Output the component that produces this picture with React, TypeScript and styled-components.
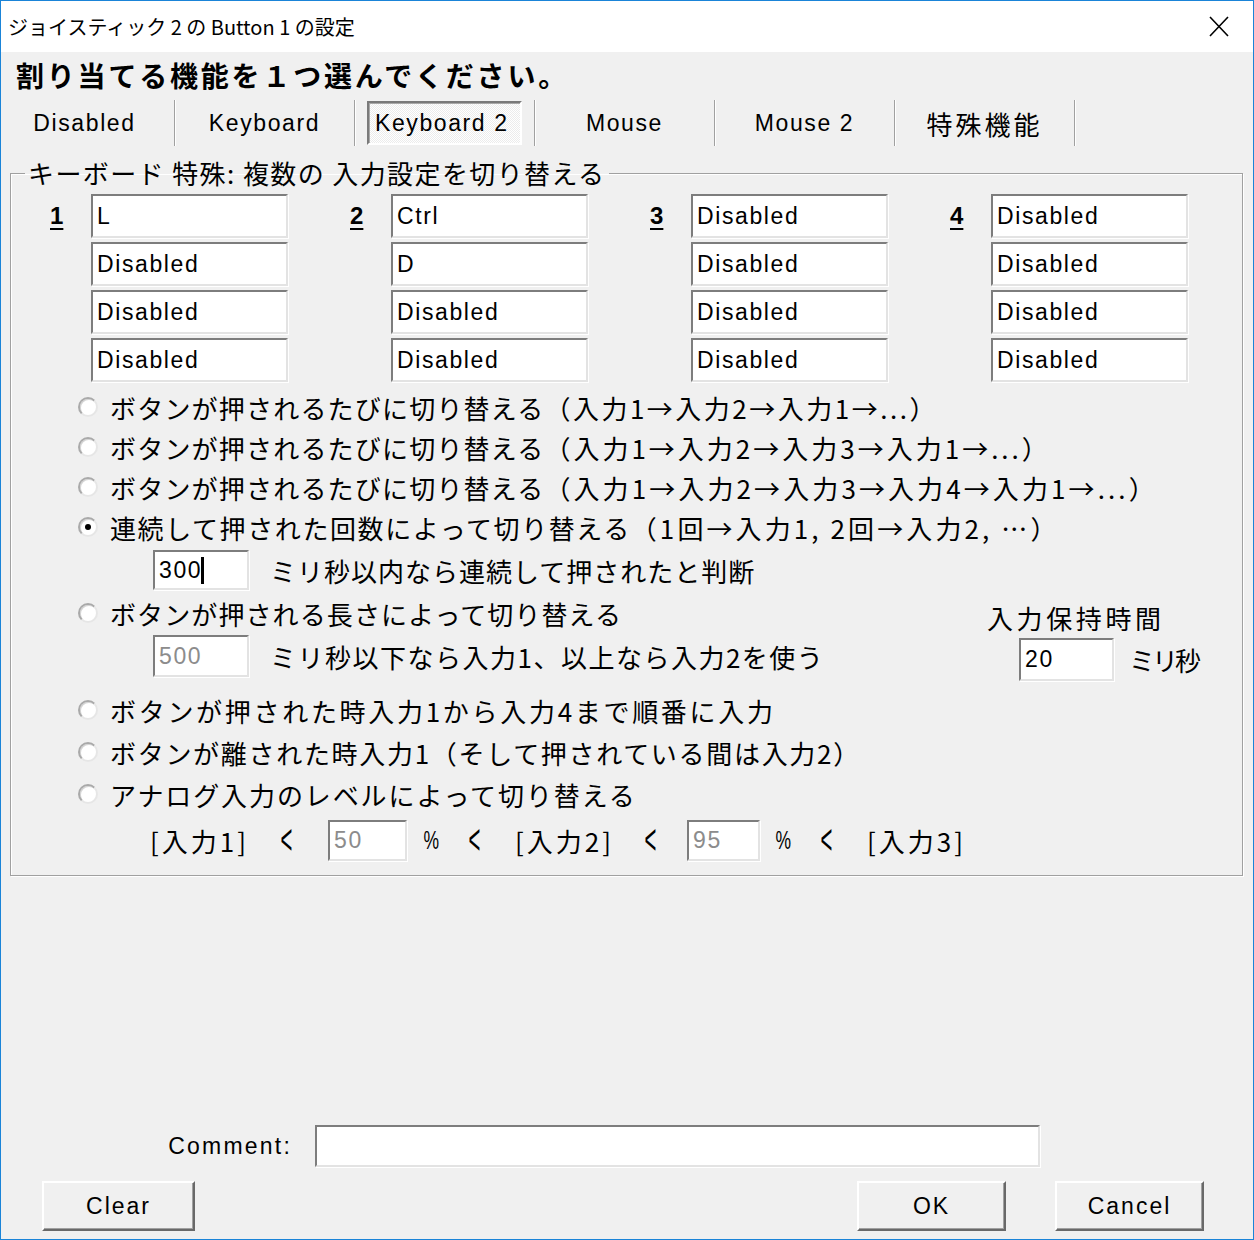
import React from "react";
import styled, { createGlobalStyle } from "styled-components";

const JP = `"Noto Sans CJK JP", sans-serif`;
const LATIN = `"Liberation Sans", "Noto Sans CJK JP", sans-serif`;

const GlobalStyle = createGlobalStyle`
  html, body {
    margin: 0;
    padding: 0;
    background: #f0f0f0;
  }
  body {
    width: 1254px;
    height: 1240px;
    overflow: hidden;
  }
  * {
    box-sizing: border-box;
  }
`;

const Window = styled.div`
  width: 1254px;
  height: 1240px;
  border: 1px solid #1a84d8;
  display: flex;
  flex-direction: column;
  background: #f0f0f0;
  overflow: hidden;
  color: #000;
`;

const TitleBar = styled.div`
  flex: none;
  height: 51px;
  background: #fff;
  display: flex;
  align-items: center;
  justify-content: space-between;
  padding: 0 24px 0 7px;
`;

const TitleText = styled.span`
  font-family: ${JP};
  font-size: 20px;
`;

const Body = styled.div`
  flex: 1;
  display: flex;
  flex-direction: column;
  padding: 0 10px 8px 9px;
`;

const Heading = styled.div`
  height: 46px;
  line-height: 46px;
  padding-left: 6px;
  font-family: ${JP};
  font-weight: 700;
  font-size: 28px;
  letter-spacing: 2.8px;
`;

const TabRow = styled.div`
  display: flex;
  height: 46px;
  margin: 2px 0 0 -15px;
`;

const Tab = styled.div<{ $jp?: boolean }>`
  width: 180px;
  height: 46px;
  display: flex;
  align-items: center;
  justify-content: center;
  border-right: 1px solid #a0a0a0;
  box-shadow: 1px 0 0 #fff;
  font-family: ${(p) => (p.$jp ? JP : LATIN)};
  font-size: ${(p) => (p.$jp ? 26 : 23)}px;
  letter-spacing: ${(p) => (p.$jp ? 3 : 1.6)}px;
`;

const TabFace = styled.div`
  width: 155px;
  height: 44px;
  display: flex;
  align-items: center;
  padding-left: 6px;
  border-style: solid;
  border-width: 2px;
  border-color: #7a7a7a #fff #fff #7a7a7a;
  box-shadow: inset 1px 1px 0 #a8a8a8;
  background: repeating-conic-gradient(#ffffff 0 25%, #ececec 0 50%) 0 0 / 2px 2px;
`;

const Group = styled.fieldset`
  margin: 12px 0 0 0;
  padding: 6px 0 10px 0;
  border: 1px solid #a0a0a0;
  box-shadow: inset 1px 1px 0 #fff, 1px 1px 0 #fff;
  min-inline-size: 0;
`;

const Legend = styled.legend`
  margin-left: 14px;
  padding: 0 3px;
  height: 30px;
  line-height: 30px;
  font-family: ${JP};
  font-size: 26px;
  letter-spacing: 1.4px;
`;

const KeyGrid = styled.div`
  display: grid;
  grid-template-columns: repeat(4, 300px);
  margin-left: 39px;
`;

const KeyColumn = styled.div`
  display: flex;
`;

const NumLabel = styled.div`
  width: 41px;
  height: 44px;
  line-height: 44px;
  font-family: ${LATIN};
  font-weight: 700;
  font-size: 24px;
  text-decoration: underline;
  text-decoration-thickness: 2px;
  text-underline-offset: 4px;
`;

const FieldStack = styled.div`
  display: flex;
  flex-direction: column;
  gap: 4px;
`;

const Field = styled.div<{ $w: number; $h: number; $disabled?: boolean }>`
  width: ${(p) => p.$w}px;
  height: ${(p) => p.$h}px;
  flex: none;
  display: flex;
  align-items: center;
  padding-left: 4px;
  background: #fff;
  border-style: solid;
  border-width: 2px;
  border-color: #7d7d7d #e3e3e3 #e3e3e3 #7d7d7d;
  box-shadow: 1px 1px 0 #fff;
  font-family: ${LATIN};
  font-size: 23px;
  letter-spacing: 1.6px;
  color: ${(p) => (p.$disabled ? "#8c8c8c" : "#000")};
  white-space: nowrap;
  overflow: hidden;
`;

const Caret = styled.span`
  display: inline-block;
  width: 3px;
  height: 27px;
  background: #000;
  margin-left: -1px;
`;

const Options = styled.div`
  padding-left: 67px;
  margin-top: 5px;
`;

const RadioRow = styled.div<{ $h: number }>`
  height: ${(p) => p.$h}px;
  display: flex;
  align-items: center;
  gap: 12px;
`;

const Radio = styled.span<{ $checked?: boolean }>`
  width: 20px;
  height: 20px;
  flex: none;
  border-radius: 50%;
  background: #fff;
  border: 2px solid;
  border-color: #a9a9a9 #e6e6e6 #e6e6e6 #a9a9a9;
  box-shadow: inset 1px 1px 0 #d6d6d6;
  display: flex;
  align-items: center;
  justify-content: center;

  &::after {
    content: "";
    width: 6px;
    height: 6px;
    border-radius: 50%;
    background: ${(p) => (p.$checked ? "#000" : "transparent")};
  }
`;

const JpText = styled.span<{ $ls?: number }>`
  font-family: ${JP};
  font-size: 26px;
  letter-spacing: ${(p) => p.$ls ?? 0.9}px;
  white-space: nowrap;
`;

const Paren = styled.span<{ $ls: number }>`
  letter-spacing: ${(p) => p.$ls}px;
`;

const SubRow = styled.div`
  height: 46px;
  display: flex;
  align-items: center;
  gap: 21px;
  padding-left: 75px;
`;

const SplitRow = styled.div`
  display: flex;
`;

const LeftCol = styled.div`
  flex: 1;
`;

const RightCol = styled.div`
  width: 255px;
  padding-top: 7px;
  display: flex;
  flex-direction: column;
`;

const HoldLabel = styled(JpText)`
  height: 36px;
  line-height: 36px;
`;

const HoldRow = styled.div`
  display: flex;
  align-items: center;
  gap: 15px;
  margin: 2px 0 0 32px;
`;

const LowerOptions = styled.div`
  margin-top: 8px;
`;

const LevelRow = styled.div`
  height: 50px;
  display: flex;
  align-items: center;
  padding-left: 72px;
`;

const LevelText = styled.span<{ $w: number; $ml: number }>`
  width: ${(p) => p.$w}px;
  margin-left: ${(p) => p.$ml}px;
  flex: none;
  font-family: ${JP};
  font-size: 26px;
  letter-spacing: 3px;
  white-space: nowrap;
`;

const Angle = styled.span<{ $ml: number }>`
  width: 15px;
  margin-left: ${(p) => p.$ml}px;
  flex: none;
  display: inline-block;
  text-align: center;
  font-family: ${LATIN};
  font-size: 24px;
  transform: scale(0.85, 1.8);
`;

const Percent = styled.span<{ $ml: number }>`
  width: 16px;
  margin-left: ${(p) => p.$ml}px;
  flex: none;
  display: inline-block;
  text-align: center;
  font-family: ${LATIN};
  font-size: 25px;
  transform: scale(0.7, 1.05);
`;

const LevelField = styled(Field)<{ $ml: number }>`
  margin-left: ${(p) => p.$ml}px;
`;

const Spacer = styled.div`
  flex: 1;
`;

const CommentRow = styled.div`
  display: flex;
  align-items: center;
  height: 42px;
  margin-bottom: 14px;
`;

const CommentLabel = styled.span`
  width: 282px;
  text-align: right;
  font-family: ${LATIN};
  font-size: 23px;
  letter-spacing: 2.2px;
  margin-right: 23px;
`;

const ButtonRow = styled.div`
  display: flex;
  height: 50px;
  padding: 0 39px 0 32px;
`;

const Button = styled.button<{ $w: number; $ml?: number; $auto?: boolean }>`
  width: ${(p) => p.$w}px;
  height: 50px;
  margin: 0 0 0 ${(p) => (p.$auto ? "auto" : `${p.$ml ?? 0}px`)};
  padding: 0;
  background: #f0f0f0;
  border-style: solid;
  border-width: 2px;
  border-color: #fff #696969 #696969 #fff;
  box-shadow: inset -1px -1px 0 #a0a0a0;
  font-family: ${LATIN};
  font-size: 23px;
  letter-spacing: 2px;
  color: #000;
`;

const CloseIcon = () => (
  <svg width="20" height="21" viewBox="0 0 20 21" fill="none">
    <path d="M1 1 L19 20 M19 1 L1 20" stroke="#000" strokeWidth="1.6" />
  </svg>
);

const keys = [
  ["L", "Disabled", "Disabled", "Disabled"],
  ["Ctrl", "D", "Disabled", "Disabled"],
  ["Disabled", "Disabled", "Disabled", "Disabled"],
  ["Disabled", "Disabled", "Disabled", "Disabled"],
];

const tabs = ["Disabled", "Keyboard", "Keyboard 2", "Mouse", "Mouse 2", "特殊機能"];

const App: React.FC = () => {
  return (
    <>
      <GlobalStyle />
      <Window>
        <TitleBar>
          <TitleText>ジョイスティック 2 の Button 1 の設定</TitleText>
          <CloseIcon />
        </TitleBar>

        <Body>
          <Heading>割り当てる機能を１つ選んでください。</Heading>

          <TabRow>
            {tabs.map((t) => (
              <Tab key={t} $jp={t === "特殊機能"}>
                {t === "Keyboard 2" ? <TabFace>{t}</TabFace> : t}
              </Tab>
            ))}
          </TabRow>

          <Group>
            <Legend>キーボード 特殊: 複数の 入力設定を切り替える</Legend>

            <KeyGrid>
              {keys.map((col, i) => (
                <KeyColumn key={i}>
                  <NumLabel>{i + 1}</NumLabel>
                  <FieldStack>
                    {col.map((v, j) => (
                      <Field key={j} $w={197} $h={44}>
                        {v}
                      </Field>
                    ))}
                  </FieldStack>
                </KeyColumn>
              ))}
            </KeyGrid>

            <Options>
              <RadioRow $h={40}>
                <Radio />
                <JpText $ls={1.2}>
                  ボタンが押されるたびに切り替える
                  <Paren $ls={2.5}>（入力1→入力2→入力1→...）</Paren>
                </JpText>
              </RadioRow>
              <RadioRow $h={40}>
                <Radio />
                <JpText $ls={1.2}>
                  ボタンが押されるたびに切り替える
                  <Paren $ls={3}>（入力1→入力2→入力3→入力1→...）</Paren>
                </JpText>
              </RadioRow>
              <RadioRow $h={40}>
                <Radio />
                <JpText $ls={1.2}>
                  ボタンが押されるたびに切り替える
                  <Paren $ls={3.1}>（入力1→入力2→入力3→入力4→入力1→...）</Paren>
                </JpText>
              </RadioRow>
              <RadioRow $h={40}>
                <Radio $checked />
                <JpText $ls={1.6}>
                  連続して押された回数によって切り替える
                  <Paren $ls={3.1}>（1回→入力1, 2回→入力2, …）</Paren>
                </JpText>
              </RadioRow>
              <SubRow>
                <Field $w={96} $h={40}>
                  300
                  <Caret />
                </Field>
                <JpText $ls={1}>ミリ秒以内なら連続して押されたと判断</JpText>
              </SubRow>

              <SplitRow>
                <LeftCol>
                  <RadioRow $h={40}>
                    <Radio />
                    <JpText $ls={1.1}>ボタンが押される長さによって切り替える</JpText>
                  </RadioRow>
                  <SubRow>
                    <Field $w={96} $h={42} $disabled>
                      500
                    </Field>
                    <JpText $ls={1.5}>ミリ秒以下なら入力1、以上なら入力2を使う</JpText>
                  </SubRow>
                </LeftCol>
                <RightCol>
                  <HoldLabel $ls={3.6}>入力保持時間</HoldLabel>
                  <HoldRow>
                    <Field $w={95} $h={43}>
                      20
                    </Field>
                    <JpText $ls={-3}>ミリ秒</JpText>
                  </HoldRow>
                </RightCol>
              </SplitRow>

              <LowerOptions>
                <RadioRow $h={42}>
                  <Radio />
                  <JpText $ls={2.7}>ボタンが押された時入力1から入力4まで順番に入力</JpText>
                </RadioRow>
                <RadioRow $h={42}>
                  <Radio />
                  <JpText $ls={1.7}>ボタンが離された時入力1（そして押されている間は入力2）</JpText>
                </RadioRow>
                <RadioRow $h={42}>
                  <Radio />
                  <JpText $ls={1.9}>アナログ入力のレベルによって切り替える</JpText>
                </RadioRow>
              </LowerOptions>

              <LevelRow>
                <LevelText $w={99} $ml={0}>[入力1]</LevelText>
                <Angle $ml={30}>&lt;</Angle>
                <LevelField $ml={34} $w={79} $h={41} $disabled>
                  50
                </LevelField>
                <Percent $ml={14}>%</Percent>
                <Angle $ml={30}>&lt;</Angle>
                <LevelText $w={98} $ml={33}>[入力2]</LevelText>
                <Angle $ml={30}>&lt;</Angle>
                <LevelField $ml={29} $w={73} $h={41} $disabled>
                  95
                </LevelField>
                <Percent $ml={13}>%</Percent>
                <Angle $ml={30}>&lt;</Angle>
                <LevelText $w={98} $ml={33}>[入力3]</LevelText>
              </LevelRow>
            </Options>
          </Group>

          <Spacer />

          <CommentRow>
            <CommentLabel>Comment:</CommentLabel>
            <Field $w={725} $h={42} />
          </CommentRow>

          <ButtonRow>
            <Button $w={153}>Clear</Button>
            <Button $w={149} $auto>
              OK
            </Button>
            <Button $w={149} $ml={49}>
              Cancel
            </Button>
          </ButtonRow>
        </Body>
      </Window>
    </>
  );
};

export default App;
